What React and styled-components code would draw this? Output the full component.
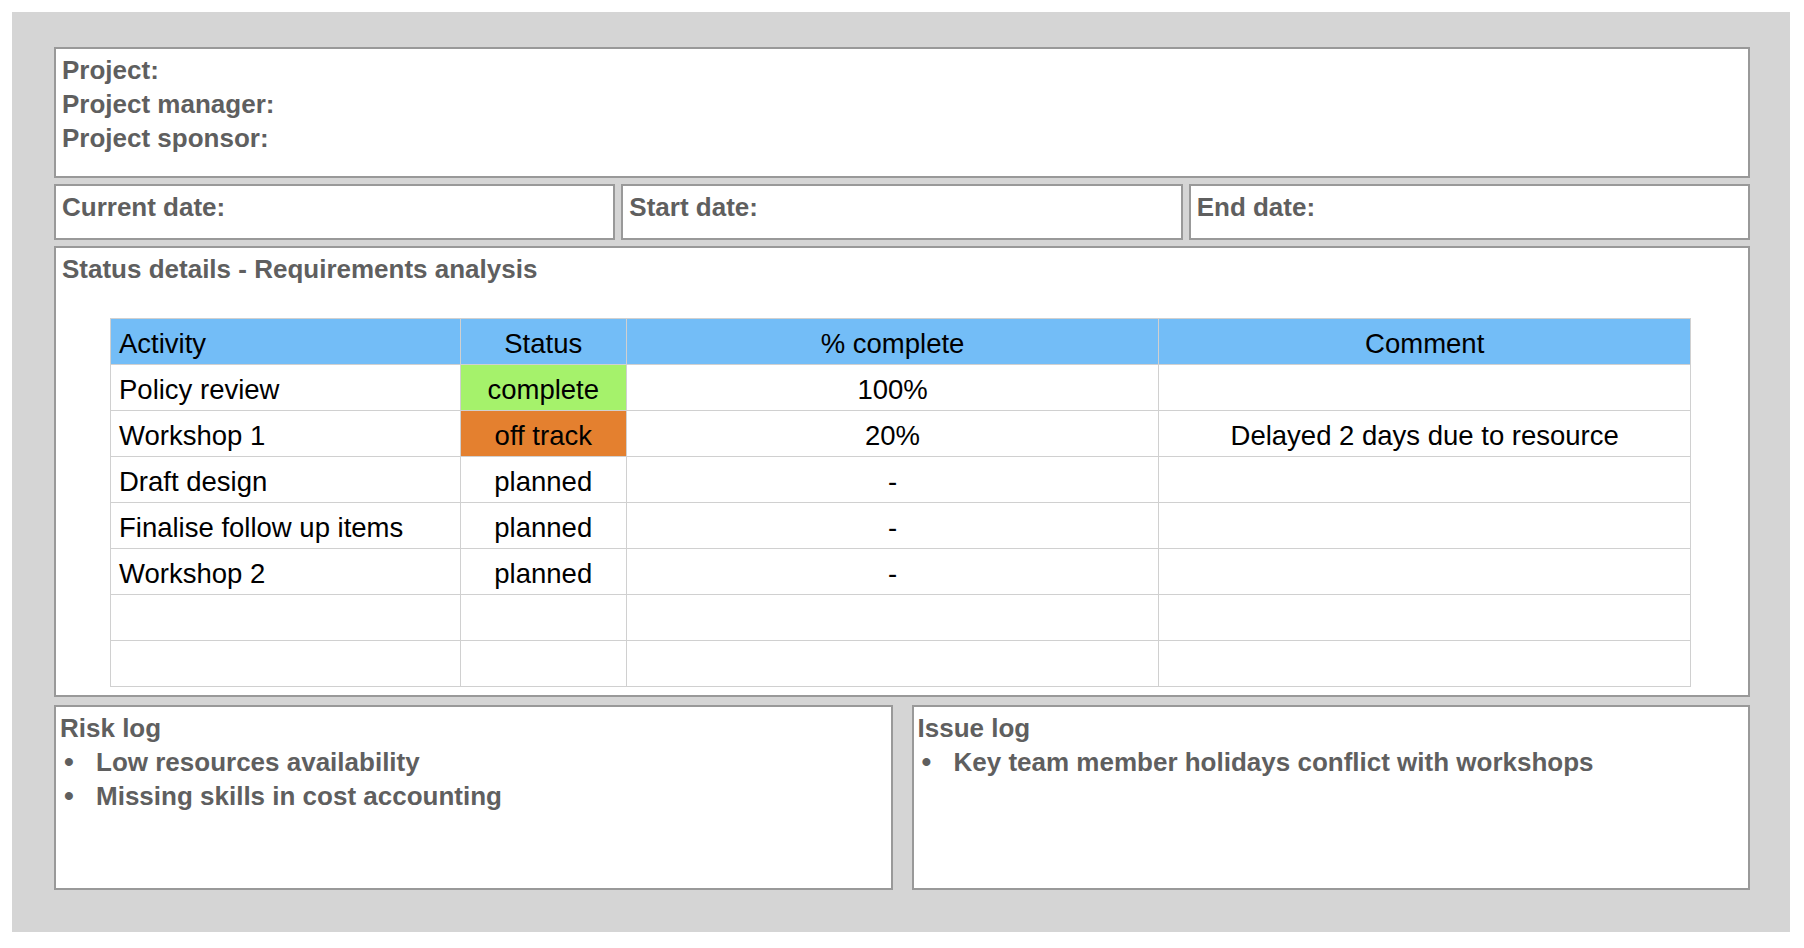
import React from "react";
import styled, { createGlobalStyle } from "styled-components";

const Global = createGlobalStyle`
  body { margin: 0; background: #fff; font-family: "Liberation Sans", Arial, sans-serif; }
`;
const Page = styled.div`padding: 12px 14px 16px 12px;`;
const Sheet = styled.div`
  background: #d5d5d5; width: 1778px; height: 920px; box-sizing: border-box;
  padding: 35px 40px 0 42px; display: flex; flex-direction: column; gap: 6px;
`;
const Box = styled.div`
  background: #fff; border: 2px solid #999; box-sizing: border-box;
  color: #5f5f5f; font-size: 26px; font-weight: bold; padding: ${p => p.$pad || "6px 6px"};
  height: ${p => p.$h}px; flex: ${p => p.$flex || "none"};
`;
const Line = styled.div`line-height: 34px;`;
const Row = styled.div`display: flex; gap: ${p => p.$gap || 6}px;`;
const Table = styled.table`
  border-collapse: collapse; margin: 32px 0 0 48px; width: 1581px; color: #000; font-size: 27.5px;
  td, th { border: 1px solid #d0d0d0; height: 41px; padding: 4px 8px 0; font-weight: normal; }
  th { background: #73bdf7; }
`;
const Cell = styled.td`text-align: ${p => p.$left ? "left" : "center"}; background: ${p => p.$bg || "transparent"};`;
const List = styled.ul`
  margin: 0; padding-left: 0; list-style: none;
  li { line-height: 34px; position: relative; padding-left: 36px; }
  li::before { content: "•"; position: absolute; left: 4px; font-size: 28px; }
`;

const rows = [
  ["Policy review", "complete", "100%", "", "#a5f26b"],
  ["Workshop 1", "off track", "20%", "Delayed 2 days due to resource", "#e4802f"],
  ["Draft design", "planned", "-", ""],
  ["Finalise follow up items", "planned", "-", ""],
  ["Workshop 2", "planned", "-", ""],
  ["", "", "", ""],
  ["", "", "", ""],
];

export default function App() {
  return (
    <Page>
      <Global />
      <Sheet>
        <Box $h={131} $pad="4px 6px">
          <Line>Project:</Line>
          <Line>Project manager:</Line>
          <Line>Project sponsor:</Line>
        </Box>
        <Row>
          <Box $h={56} $flex="1" $pad="4px 6px"><Line>Current date:</Line></Box>
          <Box $h={56} $flex="1" $pad="4px 6px"><Line>Start date:</Line></Box>
          <Box $h={56} $flex="1" $pad="4px 6px"><Line>End date:</Line></Box>
        </Row>
        <Box $h={451} $pad="4px 6px">
          <Line>Status details - Requirements analysis</Line>
          <Table>
            <colgroup><col width="350" /><col width="166" /><col width="533" /><col width="532" /></colgroup>
            <thead><tr><th style={{ textAlign: "left" }}>Activity</th><th>Status</th><th>% complete</th><th>Comment</th></tr></thead>
            <tbody>
              {rows.map((r, i) => (
                <tr key={i}>
                  <Cell $left>{r[0]}</Cell>
                  <Cell $bg={r[4]}>{r[1]}</Cell>
                  <Cell>{r[2]}</Cell>
                  <Cell>{r[3]}</Cell>
                </tr>
              ))}
            </tbody>
          </Table>
        </Box>
        <Row $gap={19} style={{ marginTop: 2 }}>
          <Box $h={185} $flex="1" $pad="4px 4px">
            <Line>Risk log</Line>
            <List><li>Low resources availability</li><li>Missing skills in cost accounting</li></List>
          </Box>
          <Box $h={185} $flex="1" $pad="4px 4px">
            <Line>Issue log</Line>
            <List><li>Key team member holidays conflict with workshops</li></List>
          </Box>
        </Row>
      </Sheet>
    </Page>
  );
}
